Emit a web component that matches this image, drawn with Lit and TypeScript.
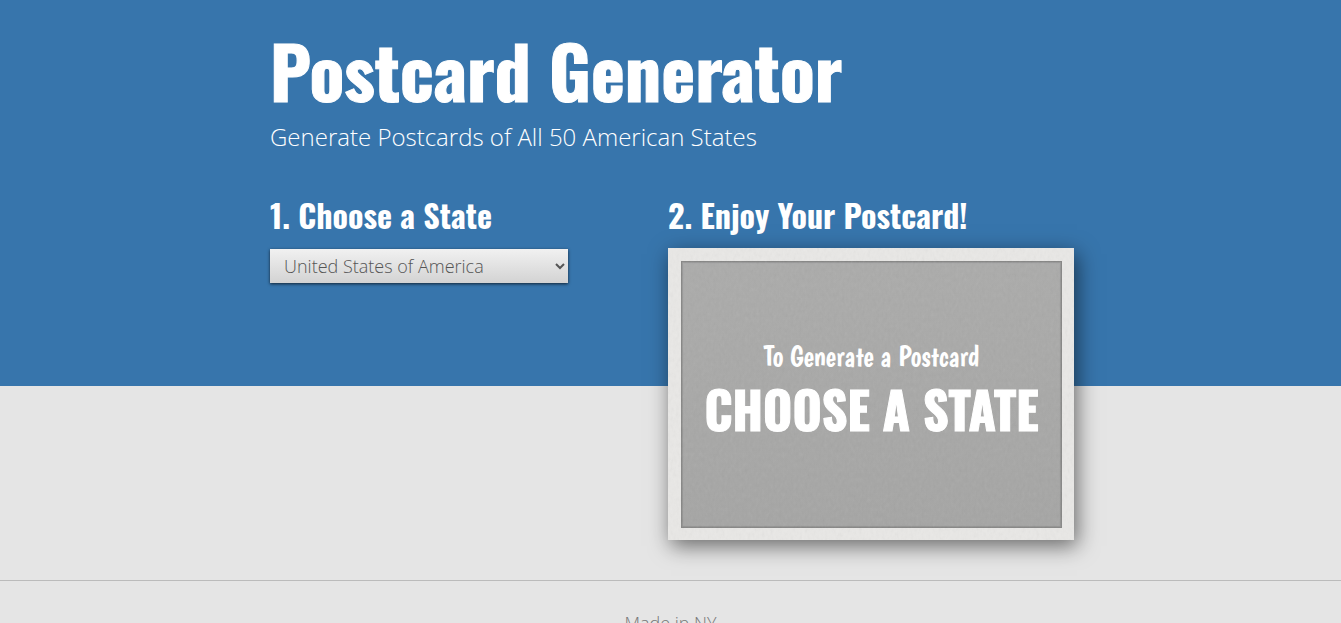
import { LitElement, html, css } from "lit";
import { customElement, state } from "lit/decorators.js";

const STATES = [
  "Alabama", "Alaska", "Arizona", "Arkansas", "California", "Colorado", "Connecticut", "Delaware",
  "Florida", "Georgia", "Hawaii", "Idaho", "Illinois", "Indiana", "Iowa", "Kansas", "Kentucky",
  "Louisiana", "Maine", "Maryland", "Massachusetts", "Michigan", "Minnesota", "Mississippi",
  "Missouri", "Montana", "Nebraska", "Nevada", "New Hampshire", "New Jersey", "New Mexico",
  "New York", "North Carolina", "North Dakota", "Ohio", "Oklahoma", "Oregon", "Pennsylvania",
  "Rhode Island", "South Carolina", "South Dakota", "Tennessee", "Texas", "Utah", "Vermont",
  "Virginia", "Washington", "West Virginia", "Wisconsin", "Wyoming",
];

@customElement("post-card")
export class PostCard extends LitElement {
  static properties = { place: {} };
  declare place: string;

  static styles = css`
    :host {
      display: block;
      position: relative;
      padding: 13px 12px 12px 13px;
      background: #e9e8e6;
      box-shadow: 3px 6px 20px rgba(0, 0, 0, 0.55);
    }
    .face {
      display: flex;
      flex-direction: column;
      align-items: center;
      box-sizing: border-box;
      min-height: 267px;
      padding-top: 79px;
      border: 1px solid #868685;
      background: linear-gradient(#ababaa, #a5a5a4);
      box-shadow: inset 0 0 1px 1px rgba(0, 0, 0, 0.12);
      color: #fff;
      text-align: center;
    }
    .lead,
    .name {
      position: relative;
      z-index: 1;
      margin: 0;
    }
    .lead {
      font: 28px/32px "Boogaloo", "Liberation Sans Narrow", "Open Sans", sans-serif;
    }
    .name {
      font: bold 50px/70px "Oswald", "Liberation Sans Narrow", "Open Sans", sans-serif;
      -webkit-text-stroke: 1px #fff;
      text-transform: uppercase;
      white-space: nowrap;
    }
    .paper {
      position: absolute;
      inset: 0;
      width: 100%;
      height: 100%;
      opacity: 0.1;
      pointer-events: none;
    }
  `;

  render() {
    return html`
      <div class="face">
        <p class="lead">${this.place ? "Greetings from" : "To Generate a Postcard"}</p>
        <p class="name">${this.place || "Choose a State"}</p>
      </div>
      <svg class="paper" aria-hidden="true">
        <filter id="grain" x="0" y="0" width="100%" height="100%">
          <feTurbulence type="fractalNoise" baseFrequency="0.35 0.2" numOctaves="3" />
          <feColorMatrix type="saturate" values="0" />
        </filter>
        <rect width="100%" height="100%" filter="url(#grain)" />
      </svg>
    `;
  }
}

@customElement("app-root")
export class AppRoot extends LitElement {
  @state() place = "";

  static styles = css`
    :host {
      display: block;
      min-height: 100vh;
      overflow: hidden;
      background: #e5e5e5;
      font-family: "Open Sans", sans-serif;
      font-weight: 300;
    }
    .hero {
      background: #3775ac;
      color: #fff;
      padding: 24px 16px 0;
    }
    .shell {
      max-width: 804px;
      margin: 0 auto;
      padding-left: 3px;
    }
    h1, h2 {
      margin: 0;
      font-family: "Oswald", "Liberation Sans Narrow", "Open Sans", sans-serif;
      font-weight: bold;
    }
    h1 {
      font-size: 72px;
      line-height: 92px;
      -webkit-text-stroke: 1px #fff;
    }
    .tagline {
      margin: 4px 0 0;
      font-size: 24px;
      line-height: 34px;
    }
    .steps {
      display: grid;
      grid-template-columns: 298fr 406fr;
      column-gap: 100px;
      margin-top: 38px;
    }
    h2 {
      font-size: 32px;
      line-height: 46px;
      margin-bottom: 10px;
      white-space: nowrap;
    }
    select {
      display: block;
      width: 100%;
      height: 34px;
      margin-top: 11px;
      padding: 0 0 0 10px;
      border: 0;
      border-radius: 0;
      background: linear-gradient(#f1f1f1, #d3d3d3);
      box-shadow: 0 1px 3px rgba(0, 0, 0, 0.7);
      color: #555;
      font: 300 18px "Open Sans", sans-serif;
    }
    post-card {
      margin-bottom: -154px;
    }
    footer {
      margin-top: 194px;
      padding-top: 30px;
      border-top: 1px solid #bbb;
      color: #777;
      font-size: 18px;
      line-height: 24px;
      text-align: center;
    }
  `;

  private choose(e: Event) {
    this.place = (e.target as HTMLSelectElement).value;
  }

  render() {
    return html`
      <main class="hero">
        <div class="shell">
          <h1>Postcard Generator</h1>
          <p class="tagline">Generate Postcards of All 50 American States</p>
          <div class="steps">
            <section>
              <h2><label for="place">1. Choose a State</label></h2>
              <select id="place" @change=${this.choose}>
                <option value="">United States of America</option>
                ${STATES.map((s) => html`<option value=${s}>${s}</option>`)}
              </select>
            </section>
            <section>
              <h2>2. Enjoy Your Postcard!</h2>
              <post-card .place=${this.place}></post-card>
            </section>
          </div>
        </div>
      </main>
      <footer>Made in NY</footer>
    `;
  }
}
